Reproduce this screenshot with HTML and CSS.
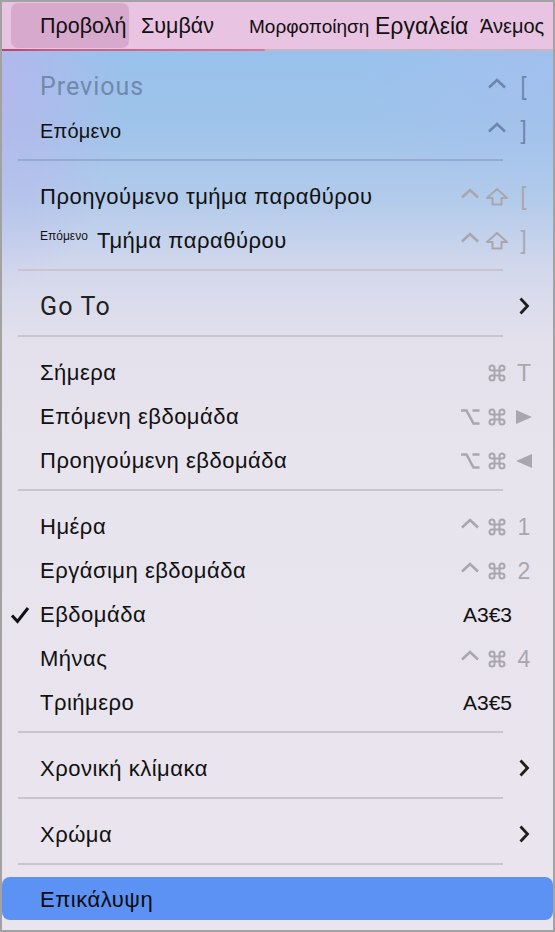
FILE: index.html
```html
<!DOCTYPE html>
<html lang="el">
<head>
<meta charset="utf-8">
<link rel="stylesheet" href="styles.css">
</head>
<body>
<div class="frame">
  <div class="menubar">
    <span class="mb-item mb-active">Προβολή</span>
    <span class="mb-item mb-events">Συμβάν</span>
    <span class="mb-item mb-format">Μορφοποίηση</span>
    <span class="mb-item mb-tools">Εργαλεία</span>
    <span class="mb-item mb-wind">Άνεμος</span>
  </div>
  <div class="underline"></div>
  <div class="menu">
    <div class="row disabled">
      <span class="label roboto prev">Previous</span>
      <span class="keys blue">
        <span class="slot s2"><svg class="caret" width="20" height="20" viewBox="0 0 20 20"><polyline points="2,10.5 10,3 18,10.5" fill="none" stroke="currentColor" stroke-width="2.6"/></svg></span>
        <span class="slot s3 br">[</span>
      </span>
    </div>
    <div class="row">
      <span class="label small">Επόμενο</span>
      <span class="keys blue">
        <span class="slot s2"><svg class="caret" width="20" height="20" viewBox="0 0 20 20"><polyline points="2,10.5 10,3 18,10.5" fill="none" stroke="currentColor" stroke-width="2.6"/></svg></span>
        <span class="slot s3 br">]</span>
      </span>
    </div>
    <div class="sep blue-sep"></div>
    <div class="row">
      <span class="label">Προηγούμενο τμήμα παραθύρου</span>
      <span class="keys">
        <span class="slot s1"><svg class="caret" width="20" height="20" viewBox="0 0 20 20"><polyline points="2,10.5 10,3 18,10.5" fill="none" stroke="currentColor" stroke-width="2.6"/></svg></span>
        <span class="slot s2"><svg width="24" height="20" viewBox="0 0 24 20"><path d="M12 2 L22 11 H16.5 V17.5 H7.5 V11 H2 Z" fill="none" stroke="currentColor" stroke-width="2" stroke-linejoin="round"/></svg></span>
        <span class="slot s3 br">[</span>
      </span>
    </div>
    <div class="row">
      <span class="label"><span class="tiny">Επόμενο</span> Τμήμα παραθύρου</span>
      <span class="keys">
        <span class="slot s1"><svg class="caret" width="20" height="20" viewBox="0 0 20 20"><polyline points="2,10.5 10,3 18,10.5" fill="none" stroke="currentColor" stroke-width="2.6"/></svg></span>
        <span class="slot s2"><svg width="24" height="20" viewBox="0 0 24 20"><path d="M12 2 L22 11 H16.5 V17.5 H7.5 V11 H2 Z" fill="none" stroke="currentColor" stroke-width="2" stroke-linejoin="round"/></svg></span>
        <span class="slot s3 br">]</span>
      </span>
    </div>
    <div class="sep"></div>
    <div class="row">
      <span class="label roboto goto">Go To</span>
      <svg class="chev" width="12" height="18" viewBox="0 0 12 18"><polyline points="2.5,1.5 9.5,9 2.5,16.5" fill="none" stroke="#1e1e1e" stroke-width="2.8"/></svg>
    </div>
    <div class="sep"></div>
    <div class="row">
      <span class="label">Σήμερα</span>
      <span class="keys">
        <span class="slot s2"><svg width="20" height="20" viewBox="0 0 24 24"><path d="M15 6v12a3 3 0 1 0 3-3H6a3 3 0 1 0 3 3V6a3 3 0 1 0-3 3h12a3 3 0 1 0-3-3" fill="none" stroke="currentColor" stroke-width="2.4"/></svg></span>
        <span class="slot s3 ch">T</span>
      </span>
    </div>
    <div class="row">
      <span class="label">Επόμενη εβδομάδα</span>
      <span class="keys">
        <span class="slot s1"><svg width="20" height="18" viewBox="0 0 20 18"><path d="M1 2.5h5.5l7 13h6M12.5 2.5h7" fill="none" stroke="currentColor" stroke-width="2.6"/></svg></span>
        <span class="slot s2"><svg width="20" height="20" viewBox="0 0 24 24"><path d="M15 6v12a3 3 0 1 0 3-3H6a3 3 0 1 0 3 3V6a3 3 0 1 0-3 3h12a3 3 0 1 0-3-3" fill="none" stroke="currentColor" stroke-width="2.4"/></svg></span>
        <span class="slot s3"><svg width="18" height="16" viewBox="0 0 18 16"><polygon points="1,1 17,8 1,15" fill="currentColor"/></svg></span>
      </span>
    </div>
    <div class="row">
      <span class="label">Προηγούμενη εβδομάδα</span>
      <span class="keys">
        <span class="slot s1"><svg width="20" height="18" viewBox="0 0 20 18"><path d="M1 2.5h5.5l7 13h6M12.5 2.5h7" fill="none" stroke="currentColor" stroke-width="2.6"/></svg></span>
        <span class="slot s2"><svg width="20" height="20" viewBox="0 0 24 24"><path d="M15 6v12a3 3 0 1 0 3-3H6a3 3 0 1 0 3 3V6a3 3 0 1 0-3 3h12a3 3 0 1 0-3-3" fill="none" stroke="currentColor" stroke-width="2.4"/></svg></span>
        <span class="slot s3"><svg width="18" height="16" viewBox="0 0 18 16"><polygon points="17,1 1,8 17,15" fill="currentColor"/></svg></span>
      </span>
    </div>
    <div class="sep"></div>
    <div class="row">
      <span class="label">Ημέρα</span>
      <span class="keys">
        <span class="slot s1"><svg class="caret" width="20" height="20" viewBox="0 0 20 20"><polyline points="2,10.5 10,3 18,10.5" fill="none" stroke="currentColor" stroke-width="2.6"/></svg></span>
        <span class="slot s2"><svg width="20" height="20" viewBox="0 0 24 24"><path d="M15 6v12a3 3 0 1 0 3-3H6a3 3 0 1 0 3 3V6a3 3 0 1 0-3 3h12a3 3 0 1 0-3-3" fill="none" stroke="currentColor" stroke-width="2.4"/></svg></span>
        <span class="slot s3 ch">1</span>
      </span>
    </div>
    <div class="row">
      <span class="label">Εργάσιμη εβδομάδα</span>
      <span class="keys">
        <span class="slot s1"><svg class="caret" width="20" height="20" viewBox="0 0 20 20"><polyline points="2,10.5 10,3 18,10.5" fill="none" stroke="currentColor" stroke-width="2.6"/></svg></span>
        <span class="slot s2"><svg width="20" height="20" viewBox="0 0 24 24"><path d="M15 6v12a3 3 0 1 0 3-3H6a3 3 0 1 0 3 3V6a3 3 0 1 0-3 3h12a3 3 0 1 0-3-3" fill="none" stroke="currentColor" stroke-width="2.4"/></svg></span>
        <span class="slot s3 ch">2</span>
      </span>
    </div>
    <div class="row">
      <svg class="check" width="20" height="18" viewBox="0 0 20 18"><polyline points="2,9.5 7.5,15.5 18,2" fill="none" stroke="#111" stroke-width="3"/></svg>
      <span class="label">Εβδομάδα</span>
      <span class="code">A3€3</span>
    </div>
    <div class="row">
      <span class="label">Μήνας</span>
      <span class="keys">
        <span class="slot s1"><svg class="caret" width="20" height="20" viewBox="0 0 20 20"><polyline points="2,10.5 10,3 18,10.5" fill="none" stroke="currentColor" stroke-width="2.6"/></svg></span>
        <span class="slot s2"><svg width="20" height="20" viewBox="0 0 24 24"><path d="M15 6v12a3 3 0 1 0 3-3H6a3 3 0 1 0 3 3V6a3 3 0 1 0-3 3h12a3 3 0 1 0-3-3" fill="none" stroke="currentColor" stroke-width="2.4"/></svg></span>
        <span class="slot s3 ch">4</span>
      </span>
    </div>
    <div class="row">
      <span class="label">Τριήμερο</span>
      <span class="code">A3€5</span>
    </div>
    <div class="sep"></div>
    <div class="row">
      <span class="label">Χρονική κλίμακα</span>
      <svg class="chev" width="12" height="18" viewBox="0 0 12 18"><polyline points="2.5,1.5 9.5,9 2.5,16.5" fill="none" stroke="#1e1e1e" stroke-width="2.8"/></svg>
    </div>
    <div class="sep"></div>
    <div class="row">
      <span class="label">Χρώμα</span>
      <svg class="chev" width="12" height="18" viewBox="0 0 12 18"><polyline points="2.5,1.5 9.5,9 2.5,16.5" fill="none" stroke="#1e1e1e" stroke-width="2.8"/></svg>
    </div>
    <div class="sep"></div>
    <div class="row selected"><span class="label">Επικάλυψη</span></div>
  </div>
</div>
</body>
</html>
```
FILE: styles.css
```css
* { box-sizing: border-box; }
html, body { margin: 0; padding: 0; }
body {
  width: 555px;
  height: 932px;
  font-family: "Liberation Sans", Arial, sans-serif;
  color: #111;
}
.frame {
  width: 555px;
  height: 932px;
  border: 2px solid #a2a2a2;
  display: flex;
  flex-direction: column;
  overflow: hidden;
  background: #e9e5ed;
}
.menubar {
  height: 47px;
  background: #e9c3e2;
  display: flex;
  align-items: stretch;
  color: #111;
}
.mb-item {
  display: flex;
  align-items: center;
  padding-top: 2px;
  white-space: nowrap;
  flex: none;
}
.mb-active {
  margin-left: 9px;
  padding-left: 29px;
  width: 118px;
  margin-top: 1px;
  margin-bottom: 1px;
  border-radius: 7px;
  background: #d7a9cd;
  font-size: 21.5px;
}
.mb-events { margin-left: 12px; width: 108px; font-size: 21.5px; }
.mb-format { width: 126px; font-size: 19px; }
.mb-tools { width: 105px; font-size: 23px; }
.mb-wind { font-size: 20px; }
.underline {
  height: 2px;
  background: linear-gradient(to right, #b9426e 0, #c45f86 50px, #cf7c9a 262px, #c9b3c6 264px, #c9b3c6 100%);
}
.menu {
  flex: 1;
  position: relative;
  padding-top: 12px;
  background:
    radial-gradient(ellipse 120px 200px at 0 40px, rgba(190,180,236,0.7), rgba(190,180,236,0) 100%),
    radial-gradient(ellipse 160px 130px at 520px 20px, rgba(170,190,240,0.5), rgba(170,190,240,0) 100%),
    linear-gradient(to bottom, #98c2ec 0, #9ec3ea 70px, #b3cbeb 150px, #d3d8ec 220px, #e3e0ec 290px, #e8e4ed 400px, #e9e4ed 100%);
}
.row {
  height: 44px;
  display: flex;
  align-items: center;
  padding: 4px 16px 0 38px;
  position: relative;
  font-size: 22px;
  letter-spacing: 0.5px;
}
.label { flex: 1; white-space: nowrap; }
.label.small { font-size: 20px; letter-spacing: 0.2px; }
.label.roboto { font-family: Roboto, "Liberation Sans", sans-serif; }
.label.prev { font-size: 25px; letter-spacing: 1px; color: #7189ad; margin-top: -2px; }
.label.goto { font-size: 25px; letter-spacing: 1.2px; color: #222; margin-top: -2px; }
.tiny { font-size: 12px; letter-spacing: 0; vertical-align: 8px; margin-right: 3px; }
.keys {
  display: grid;
  grid-template-columns: 24px 26px 27px;
  align-items: center;
  height: 26px;
  color: #a9a6ae;
  letter-spacing: 0;
}
.keys.blue { color: #6e86ab; }
.slot { display: flex; align-items: center; height: 26px; }
.s1 { grid-column: 1; justify-content: flex-start; }
.s2 { grid-column: 2; justify-content: center; }
.s3 { grid-column: 3; justify-content: center; }
.slot svg { display: block; }
.ch { font-size: 23px; padding-left: 1px; }
.br { font-size: 22px; font-weight: 300; transform: scaleY(1.15); }
.code {
  font-size: 21px;
  letter-spacing: 0;
  color: #111;
  margin-right: 25px;
}
.chev { margin-right: 7px; margin-top: -2px; }
.check {
  position: absolute;
  left: 8px;
  top: 15px;
}
.sep {
  height: 2px;
  margin: 8px 50px 12px 16px;
  background: #c9c5cd;
}
.sep.blue-sep { background: #93abcf; }
.selected {
  height: 43px;
  border-radius: 8px;
  background: #5b92f3;
  padding-top: 2px;
}
.selected .label { color: #0c0c10; }
```
